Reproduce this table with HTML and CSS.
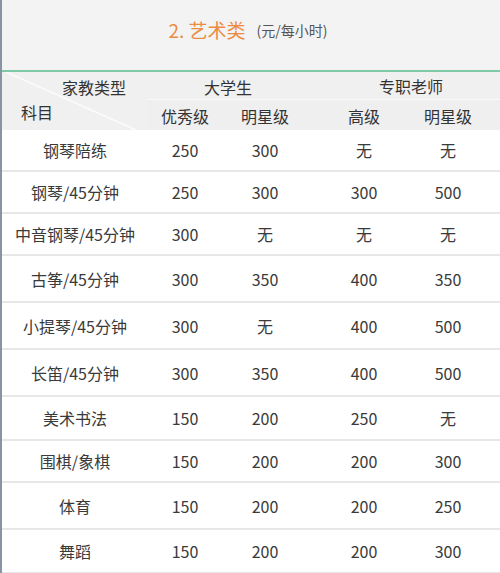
FILE: index.html
```html
<!DOCTYPE html>
<html lang="zh-CN">
<head>
<meta charset="utf-8">
<title>艺术类</title>
<link rel="stylesheet" href="styles.css">
</head>
<body>
<div class="page">
  <div class="title-bar">
    <span class="title">2. 艺术类</span>
    <span class="unit">(元/每小时)</span>
  </div>
  <div class="table">
    <div class="corner">
      <svg class="diag" viewBox="0 0 146 58" preserveAspectRatio="none" aria-hidden="true">
        <line x1="4" y1="0" x2="134" y2="58" stroke="#fbfbfb" stroke-width="1.6"/>
      </svg>
      <span class="corner-top">家教类型</span>
      <span class="corner-bottom">科目</span>
    </div>
    <div class="group g-uni">大学生</div>
    <div class="group g-pro">专职老师</div>
    <div class="sub">优秀级</div>
    <div class="sub">明星级</div>
    <div class="sub">高级</div>
    <div class="sub last">明星级</div>

    <div class="row s"><span>钢琴陪练</span><span>250</span><span>300</span><span>无</span><span class="last">无</span></div>
    <div class="row s"><span>钢琴/45分钟</span><span>250</span><span>300</span><span>300</span><span class="last">500</span></div>
    <div class="row s"><span>中音钢琴/45分钟</span><span>300</span><span>无</span><span>无</span><span class="last">无</span></div>
    <div class="row l"><span>古筝/45分钟</span><span>300</span><span>350</span><span>400</span><span class="last">350</span></div>
    <div class="row l"><span>小提琴/45分钟</span><span>300</span><span>无</span><span>400</span><span class="last">500</span></div>
    <div class="row l"><span>长笛/45分钟</span><span>300</span><span>350</span><span>400</span><span class="last">500</span></div>
    <div class="row m"><span>美术书法</span><span>150</span><span>200</span><span>250</span><span class="last">无</span></div>
    <div class="row s"><span>围棋/象棋</span><span>150</span><span>200</span><span>200</span><span class="last">300</span></div>
    <div class="row l"><span>体育</span><span>150</span><span>200</span><span>200</span><span class="last">250</span></div>
    <div class="row m"><span>舞蹈</span><span>150</span><span>200</span><span>200</span><span class="last">300</span></div>
  </div>
</div>
</body>
</html>
```

FILE: styles.css
```css
html, body {
  margin: 0;
  padding: 0;
  background: #ffffff;
}

body {
  font-family: "Noto Sans CJK SC", "Noto Sans", sans-serif;
  color: #3a3a3a;
  width: 500px;
  height: 573px;
  overflow: hidden;
}

.page {
  border-left: 2px solid #8794a3;
  min-height: 573px;
  box-sizing: border-box;
}

.title-bar {
  background: #f3f3f3;
  border-bottom: 2px solid #7ecaa7;
  display: flex;
  align-items: center;
  justify-content: center;
  height: 58px;
  padding-bottom: 12px;
  padding-right: 6px;
  box-sizing: content-box;
}

.title {
  color: #ec8c42;
  font-size: 19px;
}

.unit {
  color: #555555;
  font-size: 14px;
  margin-left: 11px;
  margin-top: 2px;
}

.table {
  display: grid;
  grid-template-columns: 146px 74px 86px 112px 80px;
  grid-template-rows: 28px 30px;
}

.corner {
  grid-row: 1 / span 2;
  grid-column: 1;
  background: #f0f0f0;
  position: relative;
  display: flex;
  flex-direction: column;
  font-size: 16px;
  color: #333333;
}

.diag {
  position: absolute;
  left: 0;
  top: 0;
  width: 100%;
  height: 100%;
}

.corner-top {
  position: relative;
  padding-left: 60px;
  padding-top: 3px;
  line-height: 24px;
}

.corner-bottom {
  position: relative;
  padding-left: 19px;
  padding-top: 1px;
  line-height: 24px;
}

.group {
  background: #f0f0f0;
  border-bottom: 1px solid #f9f9f9;
  font-size: 16px;
  color: #333333;
  display: flex;
  align-items: center;
  justify-content: center;
  padding-top: 3px;
  box-sizing: border-box;
}

.g-uni {
  grid-column: 2 / span 2;
}

.g-pro {
  grid-column: 4 / span 2;
  padding-left: 14px;
  padding-top: 0;
}

.sub {
  background: #efefef;
  font-size: 16px;
  color: #333333;
  display: flex;
  align-items: center;
  justify-content: center;
  padding-top: 2px;
  box-sizing: border-box;
}

.sub.last,
.row .last {
  padding-right: 24px;
}

.row {
  grid-column: 1 / -1;
  display: grid;
  grid-template-columns: 146px 74px 86px 112px 80px;
  align-items: center;
  border-bottom: 2px solid #e7e7e7;
  box-sizing: border-box;
  font-size: 16px;
}

.row span {
  text-align: center;
  display: block;
}

.row.s { height: 42px; }
.row.m { height: 44px; }
.row.l { height: 47px; }
```
